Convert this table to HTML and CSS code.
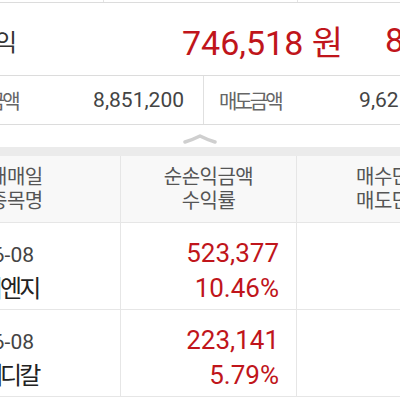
FILE: index.html
```html
<!DOCTYPE html>
<html lang="ko">
<head>
<meta charset="utf-8">
<link rel="stylesheet" href="styles.css">
</head>
<body>
<div class="screen">
  <div class="prev"><div class="pc"></div><div class="pc"></div><div class="pc"></div></div>
  <div class="sum">
    <div class="sum-label">실현손익</div>
    <div class="sum-value">746,518 원</div>
    <div class="sum-rate">8.62%</div>
  </div>
  <div class="amounts">
    <div class="amt"><span class="amt-label">매수금액</span><span class="amt-value">8,851,200</span></div>
    <div class="amt"><span class="amt-label">매도금액</span><span class="amt-value">9,621,500</span></div>
  </div>
  <div class="toggle">
    <svg class="chev" width="36" height="10" viewBox="0 0 36 10"><path d="M3 8 Q10 6 18 2 Q26 6 33 8" fill="none" stroke="#cfcfcf" stroke-width="3.5" stroke-linecap="round" stroke-linejoin="round"/></svg>
  </div>
  <div class="band"></div>
  <div class="table">
    <div class="row head">
      <div class="cell c1"><span>매매일</span><span>종목명</span></div>
      <div class="cell c2"><span>순손익금액</span><span>수익률</span></div>
      <div class="cell c3"><span>매수단가</span><span>매도단가</span></div>
    </div>
    <div class="row data">
      <div class="cell c1"><span class="date">06-08</span><span class="name">이엔지</span></div>
      <div class="cell c2"><span class="num">523,377</span><span class="num">10.46%</span></div>
      <div class="cell c3"></div>
    </div>
    <div class="row data">
      <div class="cell c1"><span class="date">06-08</span><span class="name">메디칼</span></div>
      <div class="cell c2"><span class="num">223,141</span><span class="num">5.79%</span></div>
      <div class="cell c3"></div>
    </div>
  </div>
</div>
</body>
</html>
```
FILE: styles.css
```css
html, body {
  margin: 0;
  padding: 0;
  background: #fff;
  overflow: hidden;
}
body {
  font-family: Roboto, "Noto Sans CJK KR", sans-serif;
}
.screen {
  width: 560px;
  margin-left: -80px;
}
.prev {
  display: grid;
  grid-template-columns: 183px 194px 1fr;
  height: 2px;
  border-bottom: 1px solid #dcdcdc;
}
.prev .pc + .pc {
  border-left: 1px solid #e4e4e4;
}
.sum {
  display: flex;
  align-items: center;
  height: 73px;
  border-bottom: 1px solid #dcdcdc;
  padding-top: 2px;
  box-sizing: border-box;
}
.sum-label {
  flex: none;
  width: 95px;
  text-align: right;
  font-size: 24px;
  letter-spacing: -2px;
  color: #333;
}
.sum-value {
  flex: none;
  width: 328px;
  text-align: right;
  font-size: 34px;
  color: #c0151b;
}
.sum-rate {
  margin-left: 42px;
  font-size: 34px;
  color: #c0151b;
}
.amounts {
  display: grid;
  grid-template-columns: 283px 1fr;
  height: 48px;
  border-bottom: 1px solid #dcdcdc;
}
.amt {
  display: flex;
  align-items: center;
  justify-content: space-between;
  padding: 0 19px 0 36px;
}
.amt + .amt {
  border-left: 1px solid #e0e0e0;
  padding: 0 30px 0 15px;
}
.amt-label {
  font-size: 20px;
  letter-spacing: -3px;
  color: #666;
}
.amt-value {
  font-size: 21px;
  color: #444;
}
.toggle {
  height: 22px;
  box-sizing: border-box;
  display: flex;
  justify-content: center;
  align-items: flex-end;
  padding-bottom: 3px;
}
.chev {
  display: block;
}
.band {
  height: 9px;
  background: #ebebeb;
}
.row {
  display: grid;
  grid-template-columns: 200px 176px 1fr;
  border-bottom: 1px solid #e6e6e6;
}
.head {
  height: 66px;
  background: #f8f8f8;
}
.data {
  height: 86px;
}
.cell {
  display: flex;
  flex-direction: column;
  justify-content: center;
  box-sizing: border-box;
}
.cell + .cell {
  border-left: 1px solid #e6e6e6;
}
.head .cell {
  font-size: 20px;
  letter-spacing: -0.5px;
  line-height: 24px;
  color: #555;
}
.head .c1 {
  padding-left: 69px;
}
.head .c2 {
  align-items: center;
}
.head .c3 {
  padding-left: 59px;
}
.data .c1 {
  padding-left: 61px;
  padding-top: 16px;
}
.date {
  font-size: 21px;
  line-height: 30px;
  color: #444;
}
.name {
  font-size: 24px;
  letter-spacing: -3px;
  line-height: 38px;
  color: #222;
}
.data .c2 {
  align-items: flex-end;
  padding-right: 17px;
  padding-top: 9px;
}
.num {
  font-size: 26px;
  line-height: 35px;
  color: #c0151b;
}
```
